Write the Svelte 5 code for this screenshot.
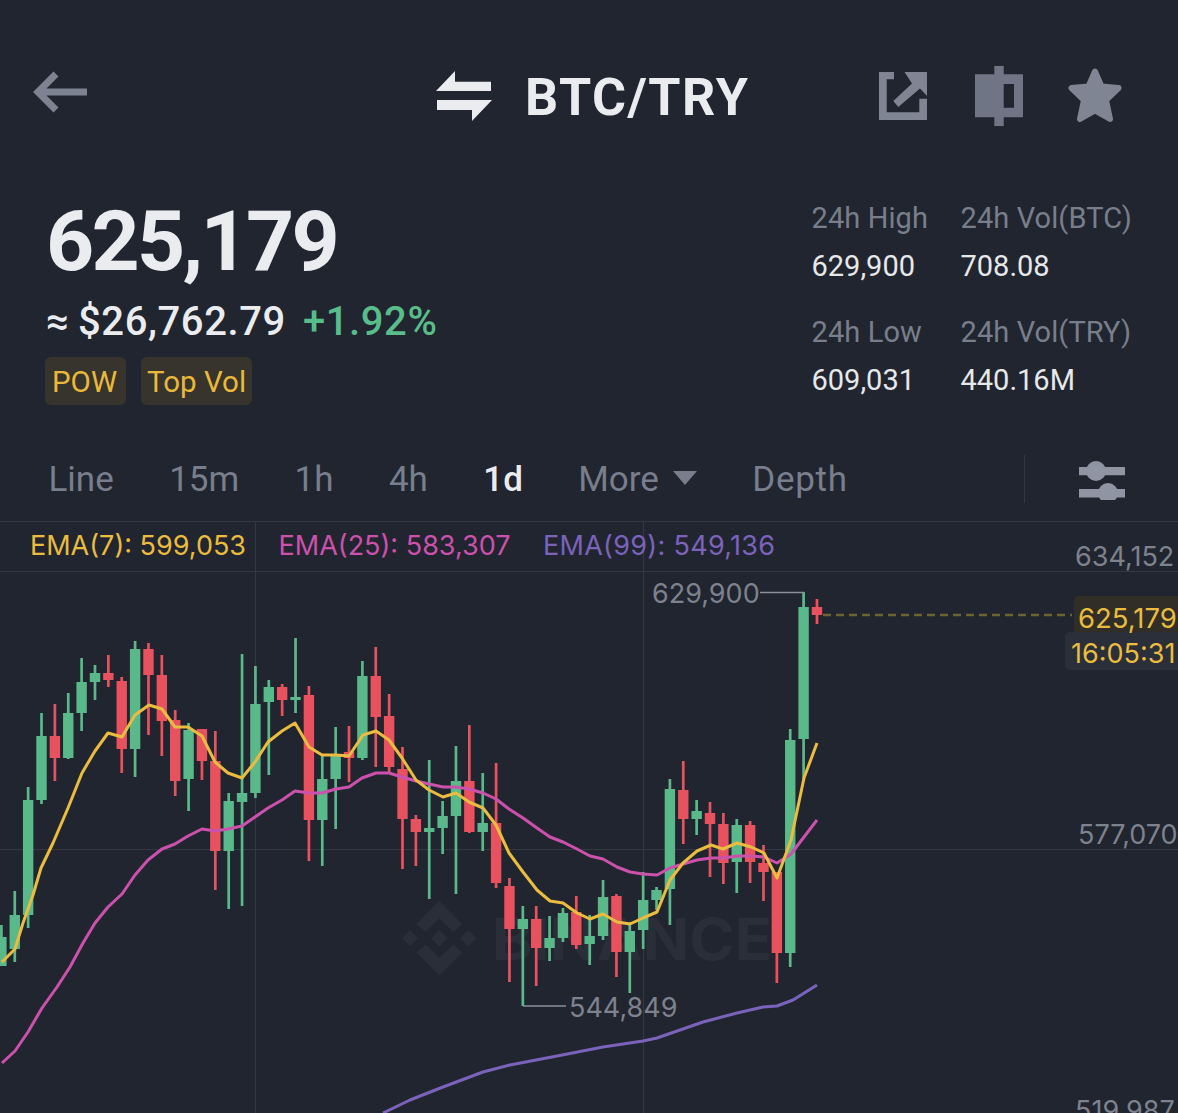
<script>
  // [up?, wickTop, wickBottom, bodyTop, bodyBottom], one per day, left to right
  const candles = [
    [1, 925, 966, 937, 966], [1, 891, 962, 915, 949], [1, 787, 928, 800, 915], [1, 713, 804, 736, 800],
    [0, 704, 781, 736, 758], [1, 693, 759, 713, 758], [1, 658, 731, 682, 713], [1, 665, 700, 673, 682],
    [0, 655, 687, 673, 680], [0, 677, 773, 681, 749], [1, 641, 777, 649, 749], [0, 643, 735, 649, 675],
    [0, 655, 756, 675, 721], [0, 710, 796, 720, 781], [1, 723, 811, 730, 779], [0, 729, 780, 729, 761],
    [0, 731, 890, 761, 851], [1, 793, 909, 801, 851], [1, 654, 906, 793, 802], [1, 666, 798, 704, 793],
    [1, 680, 775, 687, 702], [0, 684, 716, 687, 700], [1, 638, 713, 697, 700], [0, 686, 861, 695, 820],
    [1, 755, 866, 779, 820], [1, 727, 829, 755, 779], [0, 726, 782, 752, 758], [1, 661, 760, 676, 758],
    [0, 647, 767, 676, 717], [0, 694, 772, 716, 767], [0, 747, 869, 769, 819], [0, 815, 866, 819, 832],
    [1, 760, 899, 828, 832], [1, 801, 854, 816, 828], [1, 746, 894, 781, 816], [0, 725, 833, 781, 832],
    [1, 773, 851, 823, 832], [0, 763, 888, 823, 883], [0, 878, 982, 886, 929], [1, 906, 1006, 919, 929],
    [0, 906, 986, 919, 948], [1, 916, 961, 938, 948], [1, 908, 942, 913, 938], [0, 896, 949, 912, 945],
    [1, 915, 965, 936, 944], [1, 880, 940, 897, 936], [0, 894, 977, 896, 952], [1, 922, 993, 931, 952],
    [1, 872, 949, 900, 930], [1, 887, 910, 890, 900], [1, 779, 925, 789, 889], [0, 761, 844, 790, 819],
    [1, 800, 835, 811, 819], [0, 802, 877, 813, 824], [0, 813, 884, 824, 863], [1, 819, 893, 825, 862],
    [0, 821, 883, 825, 862], [0, 845, 901, 863, 872], [0, 872, 983, 872, 953], [1, 729, 967, 740, 953],
    [1, 592, 779, 607, 739], [0, 599, 624, 607, 615]
  ];

  const ema7 = '2,962 15,949 23,923 33,895 41,868 53,843 68,808 82,773 95,751 108,733 122,737 135,715 149,705 162,709 175,727 188,727 202,736 215,762 228,773 242,778 255,762 268,742 282,731 295,723 309,747 322,755 336,755 349,756 363,735 376,731 389,740 402,758 416,780 429,790 443,797 456,793 469,802 483,808 496,825 509,853 523,872 537,890 550,901 563,903 577,913 590,919 603,914 617,922 630,924 643,918 657,912 670,880 683,863 697,851 711,845 723,849 737,843 751,847 764,853 777,878 791,840 804,778 817,743';
  const ema25 = '2,1063 15,1051 28,1032 42,1008 57,987 70,967 83,943 95,923 108,907 122,894 135,875 148,860 162,849 175,844 188,836 202,829 215,831 228,829 242,826 255,817 268,808 282,800 295,791 309,793 322,793 336,789 349,787 362,778 376,773 389,773 402,777 416,781 429,784 443,787 456,787 469,789 483,793 496,799 509,809 523,818 537,828 550,837 563,842 577,849 590,856 603,859 617,867 630,872 643,874 657,875 670,868 683,864 697,860 711,858 723,858 737,856 751,856 764,857 777,863 791,854 804,837 817,820';
  const ema99 = '383,1113 410,1100 443,1087 483,1072 510,1065 557,1056 603,1047 643,1041 657,1038 703,1022 737,1013 763,1007 777,1006 793,1000 817,985';

  const tabs = ['Line', '15m', '1h', '4h', '1d', 'More', 'Depth'];
</script>

<div class="page">
  <header class="top">
    <svg class="back" width="54" height="42" viewBox="0 0 54 42">
      <path d="M23 3 5 21l18 18M5 21h49" fill="none" stroke="#7d8391" stroke-width="7" />
    </svg>
    <div class="pair">
      <svg width="56" height="50" viewBox="0 0 56 50">
        <path d="M19 0v10.700h36V20H0zM1 29h55L36 50V39H1z" fill="#eaecef" />
      </svg>
      <h1>BTC/TRY</h1>
    </div>
    <div class="actions">
      <svg class="share" width="48" height="48" viewBox="0 0 48 48">
        <path d="M0 0h15v7.300H7.700v33h32.600V26.700H48V48H0zM25.500 0H48v24l-7-7.500L19.300 35 14.300 29 33 11.500z" fill="#808594" />
      </svg>
      <svg width="48" height="60" viewBox="0 0 48 60">
        <path d="M19.300 0h9.400v8.300H48v43H28.700V60h-9.400v-8.700H0v-43h19.300zM28.700 18v23.700H39V18z" fill="#6f7585" fill-rule="evenodd" />
      </svg>
      <svg width="54" height="56" viewBox="0 0 54 56">
        <path d="M27 3.500 33.500 18.500 50.500 20 38 32 42 51 27 42.500 12 51 16 32 3.500 20 20.500 18.500z" fill="#808594" stroke="#808594" stroke-width="6" stroke-linejoin="round" />
      </svg>
    </div>
  </header>

  <section class="summary">
    <div class="price">
      <div class="last">625,179</div>
      <div class="sub"><span class="usd">≈ $26,762.79</span><span class="pct">+1.92%</span></div>
      <div class="tags"><span>POW</span><span>Top Vol</span></div>
    </div>
    <dl class="stats">
      <div><dt>24h High</dt><dd>629,900</dd></div>
      <div><dt>24h Vol(BTC)</dt><dd>708.08</dd></div>
      <div><dt>24h Low</dt><dd>609,031</dd></div>
      <div><dt>24h Vol(TRY)</dt><dd>440.16M</dd></div>
    </dl>
  </section>

  <nav class="tabs">
    {#each tabs as tab}
      <span class="tab" class:active={tab === '1d'}>
        {tab}{#if tab === 'More'}<i class="caret"></i>{/if}
      </span>
    {/each}
    <div class="tools">
      <svg width="46" height="42" viewBox="0 0 46 42">
        <path d="M0 11h46v8.300H0zM0 33h46v8.500H0z" fill="#8f95a3" transform="translate(0 -2)" />
        <circle cx="17" cy="13" r="10" fill="#8f95a3" />
        <circle cx="29" cy="35" r="10" fill="#8f95a3" />
      </svg>
    </div>
  </nav>

  <section class="chart">
    <div class="legend">
      <span class="y">EMA(7): 599,053</span>
      <span class="m">EMA(25): 583,307</span>
      <span class="p">EMA(99): 549,136</span>
    </div>
    <svg width="1178" height="592" viewBox="0 521 1178 592">
      <g stroke="#343843" stroke-width="1.200">
        <path d="M0 521.500H1178M0 571.500H1178M0 849.500H1178M255.500 521V1113M643.500 521V1113" fill="none" />
      </g>

      <g fill="#2a2e38">
        <path d="M439.300 901 462.300 924 453.300 932 439.300 918.500 425.800 932 416.300 924zM439.300 975.500 462.300 952.500 453.300 944.500 439.300 958 425.800 944.500 416.300 952.500zM439.300 930 447.300 938.300 439.300 946.500 431.300 938.300zM410 930 418 938.300 410 946.500 402 938.300zM468.300 930 476.300 938.300 468.300 946.500 460.300 938.300z" />
        <text x="492" y="960" class="mark" textLength="280" lengthAdjust="spacingAndGlyphs">BINANCE</text>
      </g>

      {#each candles as [up, wt, wb, bt, bb], i}
        {@const x = 1.4 + 13.37 * i}
        <g fill={up ? '#5ab98a' : '#e8525f'}>
          <rect x={x - 1.35} y={wt} width="2.700" height={wb - wt} />
          <rect x={x - 5.2} y={bt} width="10.400" height={Math.max(bb - bt, 3)} />
        </g>
      {/each}

      <polyline points={ema99} class="line" stroke="#7b63bb" />
      <polyline points={ema25} class="line" stroke="#cb51ac" />
      <polyline points={ema7} class="line" stroke="#eabc3f" />

      <path d="M760 592.500H804M523 1006H566" stroke="#8a8f9a" stroke-width="1.500" fill="none" />
      <text x="652" y="603" class="axis">629,900</text>
      <text x="569" y="1017" class="axis">544,849</text>

      <path d="M823 615H1072" stroke="#6b6534" stroke-width="2.500" stroke-dasharray="8 5" fill="none" />

      <text x="1075" y="566" class="axis">634,152</text>
      <text x="1078" y="844" class="axis">577,070</text>
      <text x="1075" y="1120" class="axis">519,987</text>

      <rect x="1074" y="596" width="110" height="38" rx="5" fill="#312e28" />
      <rect x="1065" y="632" width="120" height="38" rx="5" fill="#2b2f3a" />
      <text x="1078" y="628" class="tag">625,179</text>
      <text x="1071" y="663" class="tag time">16:05:31</text>
    </svg>
  </section>
</div>

<style>
  :global(body) {
    margin: 0;
    background: #21252f;
  }

  .page {
    width: 1178px;
    height: 1113px;
    overflow: hidden;
    background: #21252f;
    color: #eaecef;
    font-family: Roboto, "Liberation Sans", sans-serif;
  }

  .top {
    display: flex;
    align-items: center;
    height: 60px;
    padding: 66px 56px 0 33px;
  }

  .back {
    margin: 0 349px 8px 0;
  }

  .pair {
    display: flex;
    align-items: center;
    gap: 33px;
  }

  .pair h1 {
    margin: 3px 0 0;
    font-size: 52px;
    font-weight: 700;
    line-height: 60px;
    letter-spacing: 1.500px;
  }

  .actions {
    display: flex;
    align-items: center;
    gap: 45px;
    margin-left: auto;
  }

  .share {
    margin-right: 3px;
  }

  .summary {
    display: flex;
    justify-content: space-between;
    padding: 74px 46px 0 45px;
  }

  .last {
    font-size: 84px;
    font-weight: 700;
    line-height: 84px;
    margin-left: 1px;
    letter-spacing: -2.700px;
  }

  .sub {
    display: flex;
    gap: 17px;
    margin: 13px 0 0 1px;
    font-size: 40px;
    font-weight: 500;
    line-height: 50px;
    letter-spacing: 0.600px;
  }

  .usd {
    word-spacing: -2px;
  }

  .pct {
    color: #58bd8a;
  }

  .tags {
    display: flex;
    gap: 15px;
    margin-top: 10px;
  }

  .tags span {
    height: 48px;
    padding: 0 6px;
    border-radius: 6px;
    background: #37342d;
    color: #e8b93b;
    font-size: 29.500px;
    line-height: 50px;
  }

  .tags span:first-child {
    padding: 0 9px 0 7px;
  }

  .stats {
    display: grid;
    grid-template-columns: 149px auto;
    row-gap: 18px;
    margin: -4px 0 0;
  }

  .stats dt {
    color: #787e8c;
    font-size: 29px;
    line-height: 44px;
    letter-spacing: 0.100px;
  }

  .stats dd {
    margin: 4px 0 0;
    font-size: 29px;
    line-height: 44px;
    color: #e6e8ea;
  }

  .tabs {
    display: flex;
    align-items: center;
    gap: 55.400px;
    height: 56px;
    margin-top: 46px;
    padding: 0 53px 0 48.500px;
    color: #787e8c;
    font-size: 35px;
  }

  .tab:nth-child(7) {
    letter-spacing: 0.700px;
  }

  .tab.active {
    color: #eaecef;
    font-weight: 500;
  }

  .caret {
    display: inline-block;
    margin: 0 0 6px 14px;
    border-left: 12px solid transparent;
    border-right: 12px solid transparent;
    border-top: 14px solid #787e8c;
    vertical-align: middle;
  }

  .tools {
    display: flex;
    align-items: center;
    height: 48px;
    margin-left: auto;
    padding-left: 54px;
    border-left: 1px solid #343843;
  }

  .chart {
    position: relative;
    margin-top: 14px;
  }

  .chart svg {
    display: block;
  }

  .legend {
    position: absolute;
    top: 7px;
    left: 30px;
    display: flex;
    gap: 32.500px;
    font-family: Inter, "Liberation Sans", sans-serif;
    font-size: 27px;
    line-height: 36px;
  }

  .y { color: #eabc3f; }
  .m { color: #cb51ac; }
  .p { color: #7b63bb; letter-spacing: 0.300px; }

  .line {
    fill: none;
    stroke-width: 3;
    stroke-linejoin: round;
  }

  .axis {
    fill: #7d828e;
    font-family: Inter, "Liberation Sans", sans-serif;
    font-size: 27px;
  }

  .tag {
    fill: #eabc3f;
    font-family: Inter, "Liberation Sans", sans-serif;
    font-size: 27.500px;
  }

  .tag.time {
    font-size: 27px;
  }

  .mark {
    font-family: Inter, "Liberation Sans", sans-serif;
    font-size: 58px;
    font-weight: 700;
  }
</style>
